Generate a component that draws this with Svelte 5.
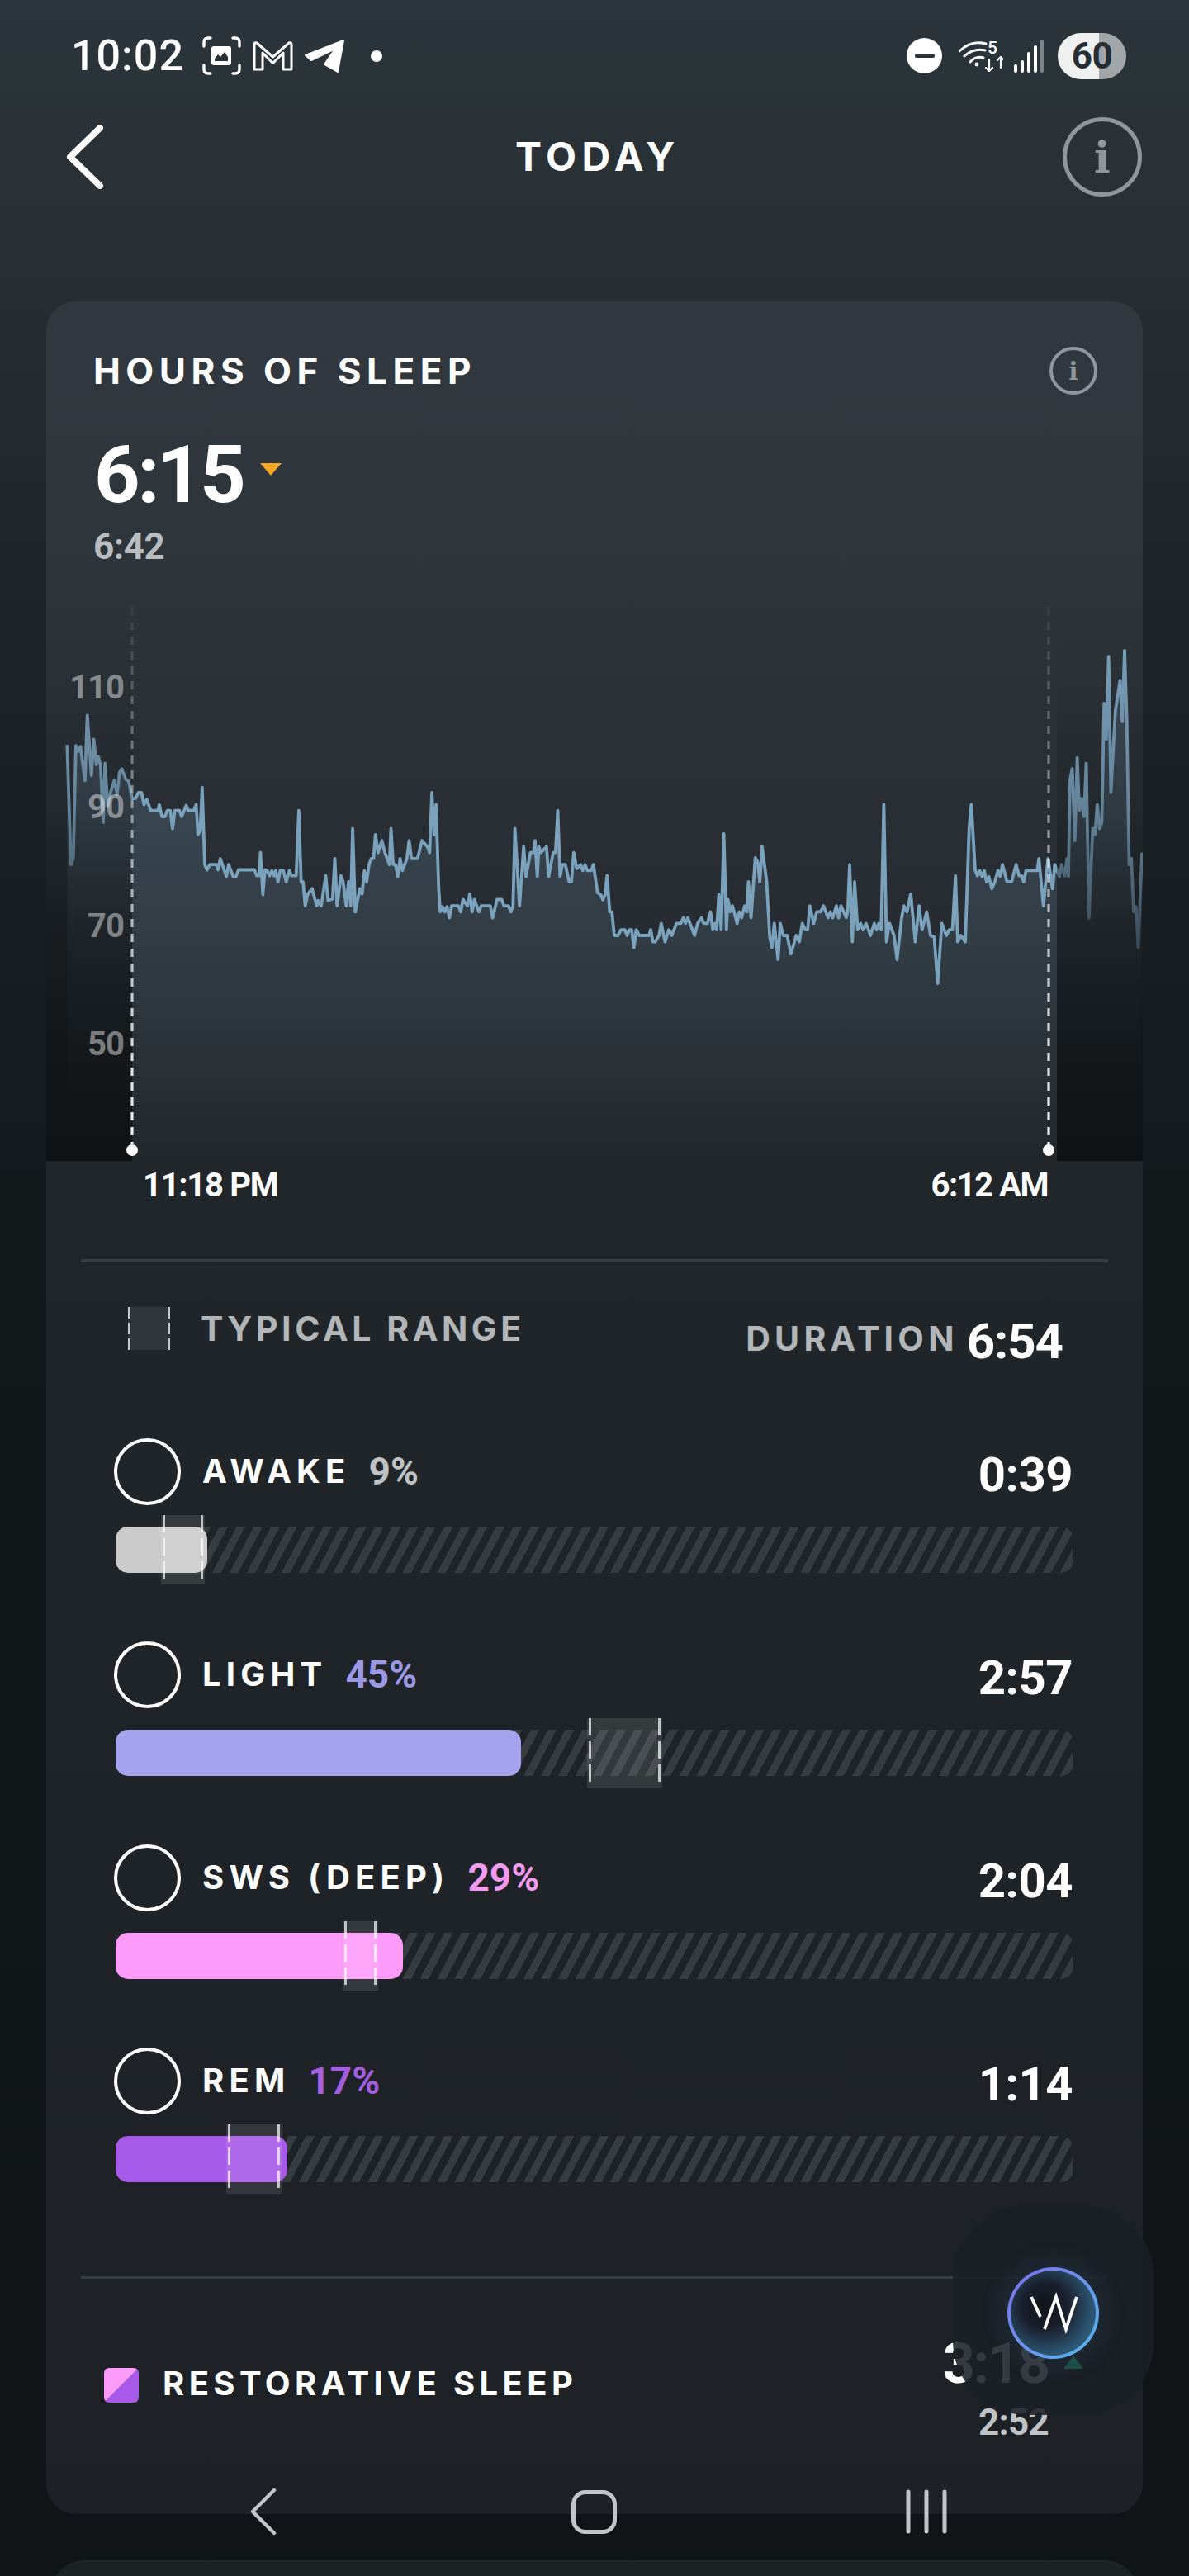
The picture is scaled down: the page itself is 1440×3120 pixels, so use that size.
<script>
  const z3 = [90,376,100,675,106,660,113,378,118,392,125,380,137,465,143,302,154,452,160,362,167,425,172,405,178,425,185,570,190,422,197,530,203,500,214,465,222,500,228,445,234,436,245,463,252,466,261,510,270,510,278,495,286,495,293,525,300,512,310,540,330,540,333,525,340,555,348,555,354,540,362,540,368,585,374,540,386,540,392,555,404,527,410,540,424,540,430,525,435,600,441,590,446,482,453,675,459,688,466,675,484,675,488,688,494,660,510,705,516,675,528,705,535,705,542,688,584,688,590,703,596,703,600,645,606,750,612,688,618,690,624,703,630,690,636,703,640,690,646,718,652,690,660,690,668,718,676,690,682,703,694,703,701,540,707,718,712,718,718,778,724,750,736,735,748,778,752,765,760,778,772,703,778,765,790,760,796,660,802,778,812,703,818,718,826,778,832,718,838,778,843,585,850,793,862,735,868,748,874,690,880,718,886,675,892,660,898,660,903,600,910,645,920,615,928,645,940,675,944,585,950,675,956,675,962,705,968,660,974,690,986,660,992,615,998,660,1014,660,1026,615,1040,630,1046,645,1052,495,1058,600,1063,525,1070,735,1074,793,1080,780,1086,793,1092,780,1098,808,1104,778,1122,778,1128,793,1134,762,1146,778,1152,748,1158,793,1164,762,1176,793,1182,778,1206,778,1212,808,1224,762,1236,762,1242,778,1254,778,1260,793,1266,778,1271,585,1283,778,1294,630,1300,705,1312,645,1320,645,1324,615,1330,705,1334,630,1340,645,1354,630,1360,705,1372,645,1378,645,1384,540,1390,705,1396,675,1404,675,1414,718,1420,718,1426,645,1434,685,1444,675,1450,690,1456,675,1462,690,1472,690,1478,675];
  const z4 = [8,745,16,750,22,763,28,750,33,703,40,793,46,793,52,852,62,852,70,838,80,838,86,852,92,838,98,838,104,882,110,838,118,852,144,852,148,838,154,868,160,868,170,852,176,822,186,868,196,838,204,852,216,822,228,822,234,808,240,822,246,808,264,852,272,822,282,808,288,822,298,822,306,793,312,838,318,822,322,838,328,750,334,838,341,598,348,838,352,762,358,793,364,778,376,822,382,793,388,808,396,778,402,793,406,718,413,808,424,658,430,668,436,718,442,630,454,718,462,855,468,882,474,822,484,912,490,822,498,852,508,852,518,898,532,852,540,868,548,822,556,838,562,838,568,778,578,822,586,793,596,793,604,778,610,793,616,808,622,793,628,808,638,778,644,808,650,778,664,808,668,793,673,675,680,868,686,718,694,838,702,822,708,838,716,822,728,852,738,822,744,838,750,822,756,838,763,525,770,868,778,822,790,852,798,912,810,808,816,778,824,793,834,748,846,868,856,778,864,838,876,793,886,852,896,856,905,972,916,822,928,852,936,838,944,838,952,703,958,868,966,852,978,868,988,585,994,525,1004,688,1010,703,1016,690,1022,705,1028,690,1034,718,1040,705,1048,735,1056,718,1064,690,1070,705,1076,675,1088,718,1100,718,1112,675,1120,703,1126,703,1132,718,1138,690,1168,690,1172,660,1184,778,1196,660,1208,735,1214,675,1226,705,1232,675,1240,703,1246,660,1250,705,1254,465,1260,435,1267,615,1273,408,1279,540,1285,510,1291,555,1297,422,1304,808,1314,585,1320,600,1326,525,1332,585,1338,570,1344,272,1350,362,1356,155,1362,495,1374,290,1386,215,1392,318,1398,140,1404,315,1410,675,1416,660,1422,793,1428,780,1434,882,1444,645];

  const pts = [];
  for (let i = 0; i < z3.length; i += 2) pts.push([40 + z3[i] * 0.4592, 720 + z3[i + 1] * 0.4847]);
  for (let i = 0; i < z4.length; i += 2) pts.push([720 + z4[i] * 0.4592, 720 + z4[i + 1] * 0.4847]);
  const line = pts.map((p) => p[0].toFixed(1) + ',' + p[1].toFixed(1)).join(' ');
  const first = pts[0][0].toFixed(1);
  const last = pts[pts.length - 1][0].toFixed(1);
  const area = line + ` ${last},1406 ${first},1406`;

  const axis = [
    { label: '110', y: 846 },
    { label: '90', y: 991 },
    { label: '70', y: 1135 },
    { label: '50', y: 1278 }
  ];

  const stages = [
    { name: 'AWAKE', pct: '9%', time: '0:39', color: '#cbcbcb', text: '#c0c3c5', fill: 111, typLeft: 55, typWidth: 53 },
    { name: 'LIGHT', pct: '45%', time: '2:57', color: '#a5a3ee', text: '#9b98e6', fill: 491, typLeft: 571, typWidth: 91 },
    { name: 'SWS (DEEP)', pct: '29%', time: '2:04', color: '#fc9bf9', text: '#f19af0', fill: 348, typLeft: 275, typWidth: 43 },
    { name: 'REM', pct: '17%', time: '1:14', color: '#a759e9', text: '#a45ee0', fill: 208, typLeft: 134, typWidth: 67 }
  ];
</script>

<div class="page">
  <header class="status">
    <div class="status-left">
      <span class="clock">10:02</span>
      <svg class="ic-shot" width="47" height="47" viewBox="0 0 47 47" fill="none" stroke="#fff" stroke-width="3.4" stroke-linecap="round">
        <path d="M2 12V7q0-5 5-5h3M37 2h3q5 0 5 5v5M45 35v5q0 5-5 5h-3M10 45H7q-5 0-5-5v-5" />
        <rect x="11" y="12" width="24" height="23" rx="3" fill="#fff" stroke="none" />
        <path d="M15 30v-3l4-5 3 3 5-6 4 6v5z" fill="#2a3238" stroke="none" />
      </svg>
      <svg class="ic-mail" width="49" height="37" viewBox="0 0 49 37" fill="none" stroke="#fff" stroke-width="3" stroke-linejoin="round">
        <path d="M2 35V5q0-3 3-2l19.5 17L44 3q3-1 3 2v30H37V15L24.5 27.5 12 15v20z" />
      </svg>
      <svg class="ic-plane" width="49" height="42" viewBox="0 0 49 42" fill="#fff" stroke="#fff" stroke-width="2" stroke-linejoin="round">
        <path d="M1 20 47 2 40 40 24 31 37 12 8 26z" />
      </svg>
      <span class="dot"></span>
    </div>
    <div class="status-right">
      <span class="dnd"><span></span></span>
      <span class="wifi">
        <svg width="54" height="38" viewBox="0 0 54 38" fill="none" stroke="#fff" stroke-width="3" stroke-linecap="round">
          <path d="M1 13Q15-1 33 4M7 19Q18 9 32 12M14 26Q21 18 30 21" />
          <circle cx="22" cy="29" r="2.4" fill="#fff" stroke="none" />
          <path stroke-width="2.2" d="M37 23v14M33 33l4 4 4-4M51 20v13M47 24l4-4 4 4" />
        </svg>
        <span class="five">5</span>
      </span>
      <svg class="signal" width="37" height="40" viewBox="0 0 37 40" fill="#fff">
        <rect x="1" y="30" width="4" height="10" rx="2" />
        <rect x="9" y="25" width="4" height="15" rx="2" />
        <rect x="17" y="15" width="4" height="25" rx="2" />
        <rect x="25" y="7" width="4" height="33" rx="2" />
        <rect x="33" y="0" width="4" height="40" rx="2" fill="#7d858a" />
      </svg>
      <span class="battery">60</span>
    </div>
  </header>

  <nav class="topnav">
    <svg class="back" width="46" height="78" viewBox="0 0 46 78" fill="none" stroke="#fff" stroke-width="8" stroke-linecap="round" stroke-linejoin="round">
      <path d="M41 4 5 39l36 35" />
    </svg>
    <h1>TODAY</h1>
    <span class="info-big">i</span>
  </nav>

  <section class="card">
    <div class="head">
      <div class="title-row">
        <h2>HOURS OF SLEEP</h2>
        <span class="info-small">i</span>
      </div>
      <div class="big-row">
        <span class="big">6:15</span>
        <span class="tri-down"></span>
      </div>
      <div class="baseline">6:42</div>
    </div>

    <svg class="chart" width="1328" height="742" viewBox="56 720 1328 742">
      <defs>
        <linearGradient id="areaG" gradientUnits="userSpaceOnUse" x1="0" y1="950" x2="0" y2="1406">
          <stop offset="0" stop-color="#6a8aa5" stop-opacity=".26" />
          <stop offset=".55" stop-color="#6a8aa5" stop-opacity=".14" />
          <stop offset="1" stop-color="#6a8aa5" stop-opacity="0" />
        </linearGradient>
        <linearGradient id="shadeG" gradientUnits="userSpaceOnUse" x1="0" y1="760" x2="0" y2="1406">
          <stop offset="0" stop-color="#0e1113" stop-opacity="0" />
          <stop offset=".35" stop-color="#0e1113" stop-opacity=".22" />
          <stop offset=".6" stop-color="#0e1113" stop-opacity=".6" />
          <stop offset="1" stop-color="#0e1113" stop-opacity=".95" />
        </linearGradient>
        <linearGradient id="dashG" gradientUnits="userSpaceOnUse" x1="0" y1="735" x2="0" y2="1385">
          <stop offset="0" stop-color="#fff" stop-opacity=".05" />
          <stop offset=".45" stop-color="#fff" stop-opacity=".55" />
          <stop offset="1" stop-color="#fff" stop-opacity=".95" />
        </linearGradient>
      </defs>
      <polygon points={area} fill="url(#areaG)" />
      <polyline points={line} fill="none" stroke="#7ba2bd" stroke-width="3.8" stroke-linejoin="round" />
      <rect x="56" y="760" width="104" height="646" fill="url(#shadeG)" />
      <rect x="1280" y="760" width="104" height="646" fill="url(#shadeG)" />
      <line x1="160" y1="735" x2="160" y2="1385" stroke="url(#dashG)" stroke-width="3.2" stroke-dasharray="10 8" />
      <line x1="1270" y1="735" x2="1270" y2="1385" stroke="url(#dashG)" stroke-width="3.2" stroke-dasharray="10 8" />
      <circle cx="160" cy="1393" r="7" fill="#fff" />
      <circle cx="1270" cy="1393" r="7" fill="#fff" />
      {#each axis as a}
        <text class="axis" x="150" y={a.y} text-anchor="end">{a.label}</text>
      {/each}
      <text class="stamp wide" x="173" y="1449">11:18 PM</text>
      <text class="stamp tight" x="1269" y="1449" text-anchor="end">6:12 AM</text>
    </svg>

    <div class="divider first"></div>

    <div class="legend">
      <div class="legend-left">
        <span class="legend-box"></span>
        <span class="legend-text">TYPICAL RANGE</span>
      </div>
      <div class="legend-right">
        <span class="legend-text dur">DURATION</span>
        <span class="dur-value">6:54</span>
      </div>
    </div>

    <div class="stages">
      {#each stages as s}
        <div class="stage">
          <div class="stage-head">
            <span class="ring"></span>
            <span class="stage-name">{s.name}</span>
            <span class="stage-pct" style="color:{s.text}">{s.pct}</span>
            <span class="stage-time">{s.time}</span>
          </div>
          <div class="track">
            <div class="fill" style="width:{s.fill}px;background:{s.color}"></div>
            <div class="typ" style="left:{s.typLeft}px;width:{s.typWidth}px"></div>
          </div>
        </div>
      {/each}
    </div>

    <div class="divider second"></div>

    <div class="restore">
      <span class="restore-icon"></span>
      <span class="restore-text">RESTORATIVE SLEEP</span>
      <div class="restore-nums">
        <span class="restore-val">3:18</span>
        <span class="tri-up"></span>
        <span class="restore-base">2:52</span>
      </div>
    </div>
  </section>

  <div class="next-card"></div>

  <div class="fab-panel"></div>
  <div class="fab">
    <svg width="70" height="56" viewBox="0 0 70 56" fill="none" stroke="#fff" stroke-width="3.8">
      <path d="M8 8l11 24M24 47 38 8l12 39L63 8" stroke-linejoin="miter" />
    </svg>
  </div>

  <div class="sysnav">
    <svg class="sys-back" width="32" height="58" viewBox="0 0 32 58" fill="none" stroke="#c2c5c7" stroke-width="4.4" stroke-linecap="round" stroke-linejoin="round">
      <path d="M29 3 3 29l26 26" />
    </svg>
    <span class="sys-home"></span>
    <svg class="sys-recent" width="50" height="54" viewBox="0 0 50 54" stroke="#c2c5c7" stroke-width="5" stroke-linecap="round">
      <path d="M3 3v48M25 3v48M47 3v48" />
    </svg>
  </div>
</div>

<style>
  :global(body) {
    margin: 0;
    background: #101416;
  }

  .page {
    position: relative;
    width: 1440px;
    height: 3120px;
    overflow: hidden;
    background: linear-gradient(180deg, #2c353b 0, #262e33 360px, #1c2327 800px, #13181b 1500px, #101416 3120px);
    color: #fff;
    font-family: Inter, "Liberation Sans", sans-serif;
  }

  .status {
    height: 135px;
    padding: 0 76px 0 87px;
    display: flex;
    align-items: center;
    justify-content: space-between;
    box-sizing: border-box;
  }

  .status-left,
  .status-right {
    display: flex;
    align-items: center;
  }

  .clock {
    font: 500 52px/1 Roboto, sans-serif;
    letter-spacing: 1px;
    width: 159px;
    margin-left: -1px;
  }

  .ic-mail {
    margin-left: 14px;
  }

  .ic-plane {
    margin-left: 14px;
  }

  .dot {
    width: 14px;
    height: 14px;
    border-radius: 50%;
    background: #fff;
    margin-left: 31px;
  }

  .dnd {
    width: 43px;
    height: 43px;
    border-radius: 50%;
    background: #fff;
    display: flex;
    align-items: center;
    justify-content: center;
  }

  .dnd span {
    width: 24px;
    height: 5px;
    border-radius: 2px;
    background: #2b3339;
  }

  .wifi {
    position: relative;
    margin-left: 20px;
    height: 38px;
    width: 54px;
    display: block;
  }

  .five {
    position: absolute;
    left: 35px;
    top: -1px;
    font: 500 21px/21px Roboto, sans-serif;
  }

  .signal {
    margin-left: 12px;
  }

  .battery {
    margin-left: 17px;
    width: 83px;
    height: 56px;
    border-radius: 28px;
    background: linear-gradient(90deg, #eff1f1 60%, #a1a6a9 60%);
    color: #262e34;
    font: 700 44px/56px Roboto, sans-serif;
    text-align: center;
    letter-spacing: -0.5px;
  }

  .topnav {
    height: 110px;
    display: grid;
    grid-template-columns: 1fr auto 1fr;
    align-items: center;
    padding: 0 57px;
  }

  .back {
    margin-left: 23px;
  }

  h1 {
    margin: 0 0 0 8px;
    font-size: 48px;
    line-height: 50px;
    font-weight: 700;
    letter-spacing: 6.5px;
  }

  .info-big,
  .info-small {
    justify-self: end;
    display: flex;
    align-items: center;
    justify-content: center;
    border-radius: 50%;
    box-sizing: border-box;
    font-family: "DejaVu Serif", serif;
    font-weight: 700;
    color: #8f979c;
  }

  .info-big {
    width: 96px;
    height: 96px;
    border: 5px solid #8f979c;
    font-size: 52px;
  }

  .info-small {
    width: 58px;
    height: 58px;
    border: 4px solid #8f979e;
    font-size: 30px;
  }

  .card {
    margin: 120px 56px 0;
    height: 2680px;
    box-sizing: border-box;
    border-radius: 36px;
    background: linear-gradient(180deg, #31383f 0, #2d343a 13%, #21262a 40%, #1d2125 100%);
  }

  .head {
    padding: 55px 55px 42px 57px;
  }

  .title-row {
    display: flex;
    align-items: center;
    justify-content: space-between;
    height: 58px;
  }

  h2 {
    margin: 0;
    font-size: 44px;
    line-height: 58px;
    font-weight: 700;
    letter-spacing: 6.5px;
  }

  .big-row {
    display: flex;
    align-items: flex-start;
    margin-top: 62px;
    height: 70px;
  }

  .big {
    font: 700 97px/70px Roboto, sans-serif;
    letter-spacing: -3.5px;
    margin-left: 1px;
  }

  .tri-down {
    width: 0;
    height: 0;
    margin: 21px 0 0 21px;
    border-left: 13px solid transparent;
    border-right: 13px solid transparent;
    border-top: 15px solid #f5a623;
  }

  .baseline {
    margin-top: 36px;
    font: 700 44px/32px Roboto, sans-serif;
    letter-spacing: -0.5px;
    color: #b9bdc2;
  }

  .chart {
    display: block;
  }

  .axis {
    font: 700 40px Roboto, sans-serif;
    letter-spacing: -1px;
    fill: rgba(255, 255, 255, 0.45);
  }

  .stamp {
    font: 700 40px Roboto, sans-serif;
    fill: #fff;
  }

  .stamp.wide {
    letter-spacing: -1.3px;
  }

  .stamp.tight {
    letter-spacing: -1.5px;
  }

  .divider {
    height: 3.5px;
    margin: 0 42px;
    background: #373e42;
  }

  .divider.first {
    margin-top: 63px;
  }

  .divider.second {
    margin-top: 114px;
  }

  .legend {
    height: 213px;
    box-sizing: border-box;
    padding: 54px 97px 0 99px;
    display: flex;
    justify-content: space-between;
    align-items: flex-start;
  }

  .legend-left {
    display: flex;
    align-items: center;
  }

  .legend-box {
    width: 51px;
    height: 52px;
    background:
      repeating-linear-gradient(180deg, #c9cccd 0 14px, transparent 14px 19px) left top / 2.5px 100% no-repeat,
      repeating-linear-gradient(180deg, #c9cccd 0 14px, transparent 14px 19px) right top / 2.5px 100% no-repeat,
      #31363b;
  }

  .legend-text {
    margin-left: 37px;
    font-size: 41px;
    line-height: 52px;
    font-weight: 700;
    letter-spacing: 4.6px;
    color: #b2b6b9;
  }

  .legend-right {
    display: flex;
    align-items: center;
    margin-top: 12px;
  }

  .dur {
    margin: 0 10px 8px 0;
    letter-spacing: 5.3px;
  }

  .dur-value {
    font: 700 60px/60px Roboto, sans-serif;
    letter-spacing: -1px;
  }

  .stages {
    padding: 0 84px 0 82px;
  }

  .stage {
    margin-bottom: 83px;
  }

  .stage:last-child {
    margin-bottom: 0;
  }

  .stage-head {
    display: flex;
    align-items: center;
    height: 81px;
    margin-bottom: 26px;
  }

  .ring {
    width: 81px;
    height: 81px;
    box-sizing: border-box;
    border: 4.5px solid #fff;
    border-radius: 50%;
  }

  .stage-name {
    margin-left: 26px;
    font-size: 40px;
    line-height: 40px;
    font-weight: 700;
    letter-spacing: 6.2px;
  }

  .stage-pct {
    margin-left: 22px;
    font: 700 46px/46px Roboto, sans-serif;
  }

  .stage-time {
    margin: 7px 1px 0 auto;
    font: 700 58px/58px Roboto, sans-serif;
    letter-spacing: -0.5px;
  }

  .track {
    position: relative;
    height: 56px;
    margin-left: 2px;
    border-radius: 15px;
    background: repeating-linear-gradient(118deg, #373c40 0 9.2px, transparent 9.2px 18.5px);
  }

  .fill {
    height: 100%;
    border-radius: 15px;
  }

  .typ {
    position: absolute;
    top: -14px;
    bottom: -14px;
    background:
      repeating-linear-gradient(180deg, rgba(255, 255, 255, 0.7) 0 21px, transparent 21px 28px) left 2px top / 3px 100% no-repeat,
      repeating-linear-gradient(180deg, rgba(255, 255, 255, 0.7) 0 21px, transparent 21px 28px) right 2px top / 3px 100% no-repeat,
      rgba(255, 255, 255, 0.1);
  }

  .restore {
    display: flex;
    align-items: flex-start;
    padding: 78px 114px 0 70px;
  }

  .restore-icon {
    width: 42px;
    height: 42px;
    margin-top: 30px;
    border-radius: 6px;
    background: linear-gradient(to bottom right, #fc9bf9 50%, #a759e9 50%);
  }

  .restore-text {
    margin: 27px 0 0 29px;
    font-size: 40px;
    line-height: 44px;
    font-weight: 700;
    letter-spacing: 5.4px;
  }

  .restore-nums {
    position: relative;
    margin-left: auto;
    display: flex;
    flex-direction: column;
    align-items: flex-end;
  }

  .restore-val {
    font: 700 68px/50px Roboto, sans-serif;
    letter-spacing: -2px;
  }

  .restore-base {
    margin-top: 30px;
    font: 700 44px/32px Roboto, sans-serif;
    letter-spacing: -0.8px;
    color: #c0c3c5;
  }

  .tri-up {
    position: absolute;
    left: calc(100% + 18px);
    top: 15px;
    width: 0;
    height: 0;
    z-index: 2;
    border-left: 12px solid transparent;
    border-right: 12px solid transparent;
    border-bottom: 16px solid #1d4d45;
  }

  .next-card {
    margin: 56px 62px 0;
    height: 120px;
    border-radius: 40px;
    background: #1c2124;
    border-top: 2px solid #20262a;
  }

  .fab-panel {
    position: absolute;
    left: 1154px;
    top: 2670px;
    width: 244px;
    height: 255px;
    border-radius: 90px;
    background: rgba(27, 32, 39, 0.88);
    z-index: 1;
  }

  .fab {
    position: absolute;
    left: 1220px;
    top: 2746px;
    width: 111px;
    height: 111px;
    box-sizing: border-box;
    border: 4px solid transparent;
    border-radius: 50%;
    background:
      radial-gradient(circle at 40% 42%, #11131a 0, #1a1f2c 32%, #2c5572 68%, #376c90 100%) padding-box,
      linear-gradient(135deg, #7f6fe9, #55b8ee) border-box;
    box-shadow: 0 0 34px rgba(70, 130, 190, 0.18);
    display: flex;
    align-items: center;
    justify-content: center;
    z-index: 3;
  }

  .sysnav {
    position: absolute;
    left: 303px;
    top: 3013px;
    display: flex;
    align-items: center;
    z-index: 4;
  }

  .sys-home {
    width: 55px;
    height: 53px;
    box-sizing: border-box;
    margin-left: 357px;
    border: 5px solid #c2c5c7;
    border-radius: 17px;
  }

  .sys-recent {
    margin-left: 350px;
  }
</style>
